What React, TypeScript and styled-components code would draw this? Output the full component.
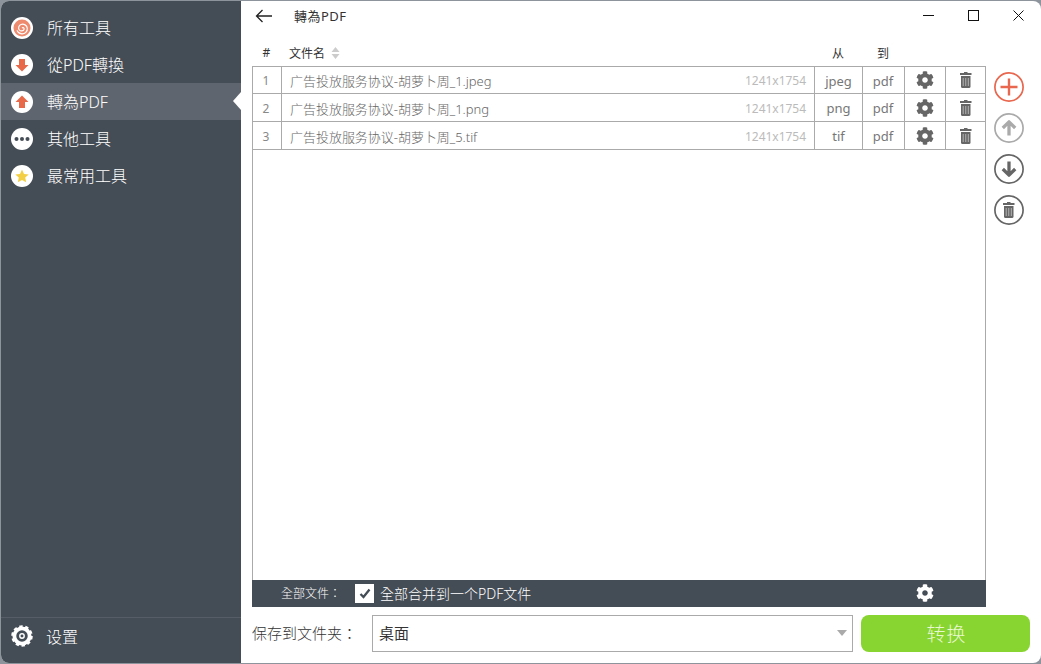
import React from 'react';
import styled, { createGlobalStyle } from 'styled-components';
import { FaCog } from 'react-icons/fa';

const Global = createGlobalStyle`
  html, body { margin: 0; padding: 0; height: 664px; overflow: hidden; background: #8d949c; }
  #root { height: 664px; padding: 1px 0 1px 1px; }
  * { box-sizing: border-box; }
  body { font-family: "Noto Sans", "Noto Sans CJK SC", sans-serif; }
`;

const Win = styled.div`
  width: 1040px; height: 662px; display: flex; overflow: hidden;
  border-radius: 8px; background: #fff;
`;
const Side = styled.aside`
  width: 240px; background: #444c55; display: flex; flex-direction: column; padding-top: 8px;
  color: #fff; flex: none;
`;
const NavList = styled.nav`flex: 1; display: flex; flex-direction: column;`;
const NavItem = styled.div<{ $active?: boolean }>`
  height: 37px; display: flex; align-items: center; gap: 14px; padding: 0 0 2px 10px; position: relative;
  font-size: 16px; font-weight: 300;
  background: ${p => (p.$active ? '#5f656e' : 'transparent')};
  ${p => p.$active ? `&::after { content: ''; position: absolute; right: 0; top: 9px; border: 9px solid transparent; border-right-color: #fff; border-left-width: 0; border-right-width: 8px; }` : ''}
`;
const NavIcon = styled.span`display: flex; margin-bottom: -2px;`;
const NavLabel = styled.span`display: block;`;
const SettingsRow = styled.div`
  height: 37px; border-top: 1px solid #565d66; display: flex; align-items: center; gap: 13px;
  padding-left: 10px; font-size: 16px; font-weight: 300; margin-bottom: 9px;
`;
const Main = styled.main`flex: 1; display: flex; flex-direction: column; min-width: 0; color: #333;`;
const TitleBar = styled.header`height: 38px; display: flex; align-items: center; padding: 0 0 9px 14px; flex: none;`;
const BackBtn = styled.span`width: 18px; height: 14px; display: flex; color: #222;`;
const Title = styled.h1`margin: 0 0 0 21px; font-size: 13px; font-weight: 400; flex: 1; color: #333; letter-spacing: .5px;`;
const WinBtns = styled.div`display: flex; gap: 34px; padding-right: 17px; align-items: center;`;
const Work = styled.div`flex: 1; display: flex; padding-left: 11px; gap: 8px; min-height: 0;`;
const TableCol = styled.section`width: 734px; display: flex; flex-direction: column;`;
const Cols = `display: grid; grid-template-columns: 29px 533px 48px 42px 41px 41px;`;
const HeadRow = styled.div`${Cols} height: 27px; align-items: center; font-size: 12px; color: #333;`;
const HeadCell = styled.div<{ $left?: boolean }>`
  text-align: ${p => (p.$left ? 'left' : 'center')};
  ${p => p.$left ? 'padding-left: 8px; display: flex; align-items: center; gap: 6px;' : ''}
`;
const TableBox = styled.div`flex: 1; border: 1px solid #aaa; border-bottom: 0; display: flex; flex-direction: column;`;
const Row = styled.div`${Cols} margin: 0 -1px; height: 28px; border-bottom: 1px solid #aaa; &:first-child { height: 27px; }`;
const Cell = styled.div`
  display: flex; align-items: center; justify-content: center; border-left: 1px solid #aaa; padding-top: 1px;
  font-size: 13px; color: #777; &:first-child { font-size: 12px; padding-right: 2px; color: #888; }
  &:last-child { border-right: 1px solid #aaa; }
`;
const PdfCell = styled(Cell)`padding-right: 1px;`;
const IconCell = styled(Cell)`padding-top: 0;`;
const NameCell = styled(Cell)`justify-content: space-between; padding: 1px 8px 0; font-size: 13px; font-weight: 300; color: #666; letter-spacing: -.03px;`;
const Dim = styled.span`font-size: 12px; color: #bbb; font-weight: 400;`;
const Footer = styled.div`height: 27px; background: #444c55; color: #fff; display: flex; align-items: center; padding: 0 0 1px 29px; font-size: 12px; font-weight: 300; flex: none; font-family: "Noto Sans", "Noto Sans CJK TC", sans-serif;`;
const Check = styled.span`width: 19px; height: 19px; background: #fff; display: flex; align-items: center; justify-content: center; margin: 0 6px 0 14px;`;
const Merge = styled.span`font-size: 14px;`;
const FooterGear = styled.span`display: flex; margin-left: 385px;`;
const Tools = styled.div`display: flex; flex-direction: column; gap: 11px; padding-top: 33px;`;
const SaveRow = styled.div`height: 56px; flex: none; display: flex; align-items: flex-start; padding: 8px 11px 0 11px;`;
const SaveLabel = styled.label`font-size: 15px; font-weight: 300; width: 120px; height: 37px; line-height: 36px; color: #333; font-family: "Noto Sans", "Noto Sans CJK TC", sans-serif;`;
const Select = styled.div`width: 481px; height: 37px; border: 1px solid #aaa; display: flex; align-items: center; justify-content: space-between; padding: 0 5px 2px 6px; font-size: 15px; color: #333;`;
const Caret = styled.span`border: 5px solid transparent; border-top: 6px solid #aaa; border-bottom: 0;`;
const Convert = styled.button`width: 169px; height: 37px; margin-left: 8px; border: 0; border-radius: 8px; background: #88d431; color: #e8f8d0; font-family: "Noto Sans CJK SC", sans-serif; font-weight: 300; font-size: 19px; letter-spacing: 1px; padding: 0 0 2px 2px;`;

const Badge = ({ children }: { children: React.ReactNode }) => (
  <NavIcon><svg width="22" height="22" viewBox="0 0 22 22"><circle cx="11" cy="11" r="11" fill="#fff" />{children}</svg></NavIcon>
);
const TrashShape = () => (
  <>
    <path d="M4 0h3.500v1H11.500v2H0V1h4z" fill="#666" />
    <path d="M1 4h9.500v10.500a1.500 1.500 0 0 1-1.500 1.500H2.500A1.500 1.500 0 0 1 1 14.500z" fill="#666" />
    <path d="M3.200 6v8M5.750 6v8M8.300 6v8" stroke="#b5b5b5" strokeWidth="1" />
  </>
);
const Trash = () => <svg width="12" height="16" viewBox="0 0 12 16"><TrashShape /></svg>;
const Circle = ({ c, children }: { c: string; children: React.ReactNode }) => (
  <svg width="30" height="30" viewBox="0 0 30 30" style={{ display: 'block' }}>
    <circle cx="15" cy="15" r="14.100" fill="#fff" stroke={c} strokeWidth="1.700" />{children}
  </svg>
);
const ArrowPath = ({ c }: { c: string }) => (
  <path d="M15 22.500V9M8.800 15L15 8.800 21.200 15" fill="none" stroke={c} strokeWidth="3.300" strokeLinejoin="round" />
);

const rows = [
  ['1', '广告投放服务协议-胡萝卜周_1.jpeg', 'jpeg'],
  ['2', '广告投放服务协议-胡萝卜周_1.png', 'png'],
  ['3', '广告投放服务协议-胡萝卜周_5.tif', 'tif'],
];

export default function App() {
  return (
    <>
      <Global />
      <Win>
        <Side>
          <NavList>
            <NavItem>
              <Badge>
                <circle cx="11" cy="11" r="8.500" fill="#ee8a6e" />
                <path d="M11 11c1-1 2.500 0 2 1.500-.6 1.700-3.500 2-4.700.5-1.400-1.800-.6-4.700 1.700-5.500 2.800-1 6 .8 6.300 3.700.3 3.300-2.400 6-5.600 5.700-2.200-.2-4-1.600-4.700-3.500" fill="none" stroke="#fff" strokeWidth="1.200" />
              </Badge>
              <NavLabel>所有工具</NavLabel>
            </NavItem>
            <NavItem>
              <Badge><path d="M8 5h6v6h3.500L11 17.500 4.500 11H8z" fill="#e8694a" /></Badge>
              <NavLabel>從PDF轉換</NavLabel>
            </NavItem>
            <NavItem $active>
              <Badge><path d="M11 4.500l6.500 6.500H14v6H8v-6H4.500z" fill="#e8694a" /></Badge>
              <NavLabel>轉為PDF</NavLabel>
            </NavItem>
            <NavItem>
              <Badge>
                <circle cx="5.500" cy="11" r="2" fill="#444c55" />
                <circle cx="11" cy="11" r="2" fill="#444c55" />
                <circle cx="16.500" cy="11" r="2" fill="#444c55" />
              </Badge>
              <NavLabel>其他工具</NavLabel>
            </NavItem>
            <NavItem>
              <Badge><path d="M11 4.500l2 4.400 4.700.5-3.500 3.200 1 4.700-4.200-2.400-4.200 2.400 1-4.700-3.500-3.200 4.700-.5z" fill="#f3cf45" /></Badge>
              <NavLabel>最常用工具</NavLabel>
            </NavItem>
          </NavList>
          <SettingsRow>
            <svg width="22" height="22" viewBox="0 0 23 23">
              <circle cx="11.500" cy="11.500" r="8" fill="none" stroke="#fff" strokeWidth="4" />
              <circle cx="11.500" cy="11.500" r="10" fill="none" stroke="#fff" strokeWidth="2.500" strokeDasharray="3.500 2.780" />
              <circle cx="11.500" cy="11.500" r="2.300" fill="none" stroke="#fff" strokeWidth="1.500" />
            </svg>
            <NavLabel>设置</NavLabel>
          </SettingsRow>
        </Side>
        <Main>
          <TitleBar>
            <BackBtn>
              <svg width="18" height="14" viewBox="0 0 18 14" fill="none" stroke="currentColor" strokeWidth="1.300"><path d="M17 7H1.500M7.500 1L1.500 7l6 6" /></svg>
            </BackBtn>
            <Title>轉為PDF</Title>
            <WinBtns>
              <svg width="11" height="11" viewBox="0 0 11 11"><path d="M0 5.500h11" stroke="#111" strokeWidth="1" /></svg>
              <svg width="11" height="11" viewBox="0 0 11 11" fill="none"><rect x=".5" y=".5" width="10" height="10" stroke="#111" /></svg>
              <svg width="11" height="11" viewBox="0 0 11 11" fill="none"><path d="M.5.500l10 10M10.500.500l-10 10" stroke="#111" /></svg>
            </WinBtns>
          </TitleBar>
          <Work>
            <TableCol>
              <HeadRow>
                <HeadCell>#</HeadCell>
                <HeadCell $left>文件名
                  <svg width="9" height="12" viewBox="0 0 9 12" fill="#ccc"><path d="M4.500 0L8.500 5h-8zM4.500 12L.5 7h8z" /></svg>
                </HeadCell>
                <HeadCell>从</HeadCell>
                <HeadCell>到</HeadCell>
                <HeadCell /><HeadCell />
              </HeadRow>
              <TableBox>
                {rows.map(r => (
                  <Row key={r[0]}>
                    <Cell>{r[0]}</Cell>
                    <NameCell><span>{r[1]}</span><Dim>1241x1754</Dim></NameCell>
                    <Cell>{r[2]}</Cell>
                    <PdfCell>pdf</PdfCell>
                    <IconCell><FaCog size={18} color="#666" /></IconCell>
                    <IconCell><Trash /></IconCell>
                  </Row>
                ))}
              </TableBox>
              <Footer>
                全部文件：
                <Check>
                  <svg width="12" height="11" viewBox="0 0 12 11"><path d="M1.500 6l3 3 6-7.500" fill="none" stroke="#444c55" strokeWidth="2.300" /></svg>
                </Check>
                <Merge>全部合并到一个PDF文件</Merge>
                <FooterGear><FaCog size={18} color="#fff" /></FooterGear>
              </Footer>
            </TableCol>
            <Tools>
              <Circle c="#e8674e"><path d="M15 6.500v17M6.500 15h17" stroke="#e8674e" strokeWidth="2.400" /></Circle>
              <Circle c="#aaa"><ArrowPath c="#aaa" /></Circle>
              <Circle c="#666"><g transform="rotate(180 15 15)"><ArrowPath c="#666" /></g></Circle>
              <Circle c="#666"><g transform="translate(9 7)"><TrashShape /></g></Circle>
            </Tools>
          </Work>
          <SaveRow>
            <SaveLabel>保存到文件夹：</SaveLabel>
            <Select>桌面<Caret /></Select>
            <Convert>转换</Convert>
          </SaveRow>
        </Main>
      </Win>
    </>
  );
}
